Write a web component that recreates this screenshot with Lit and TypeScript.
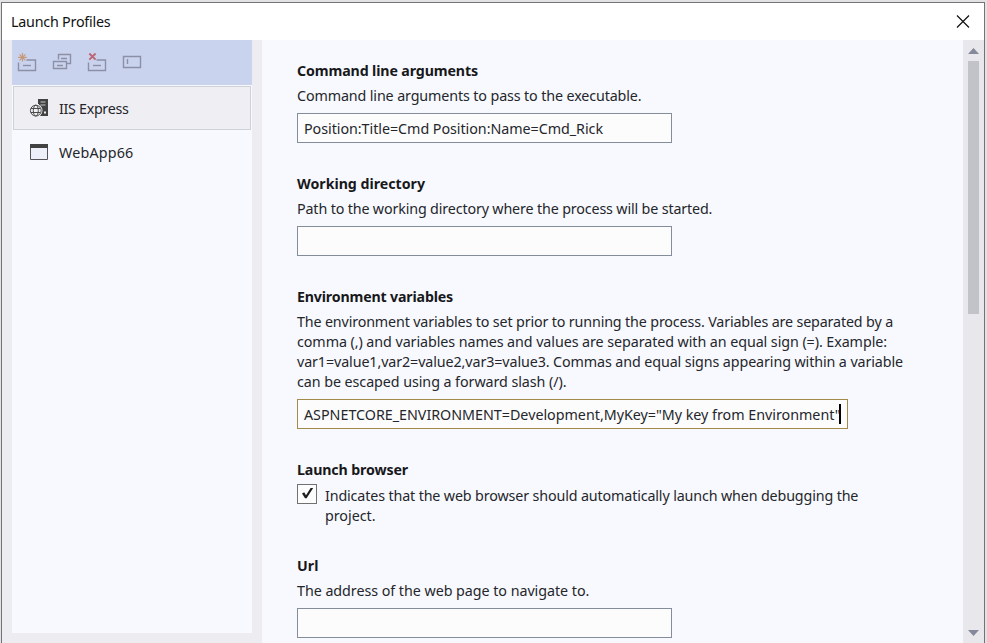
import { LitElement, html, css, svg, nothing } from "lit";
import { customElement, property } from "lit/decorators.js";

/** One line of text, tracked so that it occupies a given width. */
@customElement("text-line")
class TextLine extends LitElement {
  @property({ type: Number }) width = 0;
  @property() text = "";
  static styles = css`
    :host { display: block; height: 20px; line-height: 20px; white-space: pre; }
    .run { display: inline-block; }
  `;
  render() { return html`<span class="run">${this.text}</span>`; }
  updated() {
    const run = this.renderRoot.querySelector<HTMLElement>(".run")!;
    run.style.letterSpacing = "0";
    const natural = run.getBoundingClientRect().width;
    if (this.width && natural) run.style.letterSpacing = `${(this.width - natural) / this.text.length}px`;
  }
}

type Line = [string, number];
interface Field { title: Line; lines: Line[]; value?: Line; kind?: "focus" | "check"; }

const fields: Field[] = [
  { title: ["Command line arguments", 181], lines: [["Command line arguments to pass to the executable.", 344.5]], value: ["Position:Title=Cmd Position:Name=Cmd_Rick", 299] },
  { title: ["Working directory", 128], lines: [["Path to the working directory where the process will be started.", 415.3]] },
  {
    title: ["Environment variables", 156],
    lines: [
      ["The environment variables to set prior to running the process. Variables are separated by a", 596],
      ["comma (,) and variables names and values are separated with an equal sign (=). Example:", 590],
      ["var1=value1,var2=value2,var3=value3. Commas and equal signs appearing within a variable", 606],
      ["can be escaped using a forward slash (/).", 269.5],
    ],
    value: ['ASPNETCORE_ENVIRONMENT=Development,MyKey="My key from Environment"', 536.5],
    kind: "focus",
  },
  { title: ["Launch browser", 111], lines: [["Indicates that the web browser should automatically launch when debugging the", 533.3], ["project.", 50.5]], kind: "check" },
  { title: ["Url", 21.5], lines: [["The address of the web page to navigate to.", 292.3]] },
];

const line = ([text, width]: Line, cls = "") => html`<text-line class=${cls} .text=${text} .width=${width}></text-line>`;

const card = svg`<path d="M1.5 9.5V17.5H18.5V7H9.5" /><path d="M6 12.5H14" />`;

const newIcon = html`<svg class="tool" viewBox="0 0 20 20" width="20" height="20">
  ${card}<path class="spark" d="M5.5 0V8.6M1.2 4.3H9.8M2.5 1.3L8.5 7.3M8.5 1.3L2.5 7.3" /></svg>`;
const copyIcon = html`<svg class="tool" viewBox="0 0 20 20" width="20" height="20">
  <path d="M6.5 6.5V1.5H18.5V10.5H15M9 5.5H15" /><path d="M1.5 8.5H14.5V15.5H1.5ZM5 12.5H11" /></svg>`;
const deleteIcon = html`<svg class="tool" viewBox="0 0 20 20" width="20" height="20">
  ${card}<path class="cross" d="M2.3 .5L8.6 6.6M8.6 .5L2.3 6.6" /></svg>`;
const renameIcon = html`<svg class="tool" viewBox="0 0 20 20" width="20" height="20">
  <path d="M1.5 3.5H18.5V14.5H1.5ZM5.5 6V11" /></svg>`;

const serverIcon = html`<svg class="glyph" viewBox="0 0 20 20" width="20" height="20">
  <path d="M9 1H19V18H10V6H9Z" fill="#424242" />
  <path d="M11.5 4H16.5M11.5 7H16.5" stroke="#c8c8cc" />
  <rect x="15" y="13.5" width="2" height="2" fill="#f0f0f4" />
  <circle cx="6.8" cy="12.6" r="6.7" fill="#efeff2" />
  <g fill="none" stroke="#4a4a4a"><circle cx="6.8" cy="12.6" r="5.4" />
  <ellipse cx="6.8" cy="12.6" rx="2.5" ry="5.4" /><path d="M2 10.5H11.6M2 14.5H11.6" /></g></svg>`;
const windowIcon = html`<svg class="glyph" viewBox="0 0 20 20" width="20" height="20">
  <path d="M1.5 2.5H18.5V17.5H1.5Z" fill="#edf0f8" stroke="#555558" /><path d="M1 2H19V6H1Z" fill="#424242" /></svg>`;

@customElement("app-root")
class AppRoot extends LitElement {
  static styles = css`
    :host, * { box-sizing: border-box; }
    :host { display: block; width: 987px; height: 643px; padding: 2px 2px 0 1px; overflow: hidden; background: #e2e2e4;
      font: 14.3px "Noto Sans", "Open Sans", sans-serif; color: #25262b; }
    svg { display: block; flex: none; }
    .window { display: flex; flex-direction: column; height: 641px; border: 1px solid #737376; border-bottom: 0; background: #ededf1; }
    .titlebar { display: flex; align-items: center; justify-content: space-between; height: 37px; padding: 0 14px 0 9px; background: #fff; color: #111; }
    .body { display: flex; height: 603px; }
    .side { width: 240px; height: 593px; margin-left: 10px; background: #f7f9fe; }
    .toolbar { display: flex; gap: 15px; height: 45px; padding: 13px 5px; background: #cad3ee; }
    .tool { fill: none; stroke: #8b90a6; stroke-width: 1.4; }
    .tool .spark { stroke: #c69a79; stroke-width: 1.2; }
    .tool .cross { stroke: #bd6876; stroke-width: 2; }
    .item { display: flex; align-items: center; gap: 10px; height: 44px; margin: 0 1px; padding-left: 15px; border: 1px solid transparent; }
    .item text-line { padding-top: 1px; height: 21px; margin-top: 1px; }
    .item.on { margin-top: 1px; background: #efeff3; border-color: #cfd1d9; }
    .main { flex: 1; margin-left: 10px; padding: 21px 0 0 35px; background: #f7f9fe; overflow: hidden; }
    .field { margin-bottom: 31px; }
    .field.check { margin-bottom: 30px; }
    .title { font-weight: 700; color: #18181b; font-size: 14.2px; margin-bottom: 5px; }
    .box { display: flex; align-items: center; width: 375px; height: 30px; margin-top: 7px; padding-left: 6px; background: #fcfcfd; border: 1px solid #858c9b; }
    .box text-line { padding-top: 1px; height: 21px; }
    .box.focus { width: 551px; border-color: #a28a4a; }
    .caret { width: 2px; height: 20px; margin-left: -1.5px; background: #000; }
    .row { display: flex; gap: 8px; margin-top: -1px; }
    .row .words { padding-top: 2px; }
    .tick { width: 20px; height: 20px; background: #fdfdfd; border: 1px solid #717171; }
    .scroll { display: flex; flex-direction: column; align-items: center; justify-content: space-between; width: 21px; padding: 8px 0 7px; background: #e8e8ec; }
    .thumb { width: 11px; height: 253px; margin: 7px 0 auto; background: #c2c3c9; }
  `;
  render() {
    return html`<div class="window">
      <div class="titlebar">${line(["Launch Profiles", 99.5])}
        <svg width="14" height="14" viewBox="0 0 14 14"><path d="M1 .5L13 12.5M13 .5L1 12.5" stroke="#111" stroke-width="1.2" /></svg>
      </div>
      <div class="body">
        <div class="side">
          <div class="toolbar">${newIcon}${copyIcon}${deleteIcon}${renameIcon}</div>
          <div class="item on">${serverIcon}${line(["IIS Express", 69.5])}</div>
          <div class="item">${windowIcon}${line(["WebApp66", 74.5])}</div>
        </div>
        <div class="main">${fields.map((f) => this.field(f))}</div>
        <div class="scroll">
          <svg width="11" height="6" viewBox="0 0 11 6"><path d="M0 6L5.5 0L11 6Z" fill="#868999" /></svg>
          <div class="thumb"></div>
          <svg width="11" height="6" viewBox="0 0 11 6"><path d="M0 0L5.5 6L11 0Z" fill="#868999" /></svg>
        </div>
      </div>
    </div>`;
  }
  private field(f: Field) {
    const lines = f.lines.map((l) => line(l));
    return html`<div class="field ${f.kind ?? ""}">
      ${line(f.title, "title")}
      ${f.kind === "check"
        ? html`<div class="row"><div class="tick"><svg width="18" height="18" viewBox="0 0 18 18"><path d="M4 8.5L6.2 7.3L8 10.3L12.6 3H15.2L8.6 13.2H7Z" fill="#1e1e1e" /></svg></div><div class="words">${lines}</div></div>`
        : html`${lines}<div class="box ${f.kind ?? ""}">${f.value ? line(f.value) : nothing}${f.kind ? html`<i class="caret"></i>` : nothing}</div>`}
    </div>`;
  }
}
